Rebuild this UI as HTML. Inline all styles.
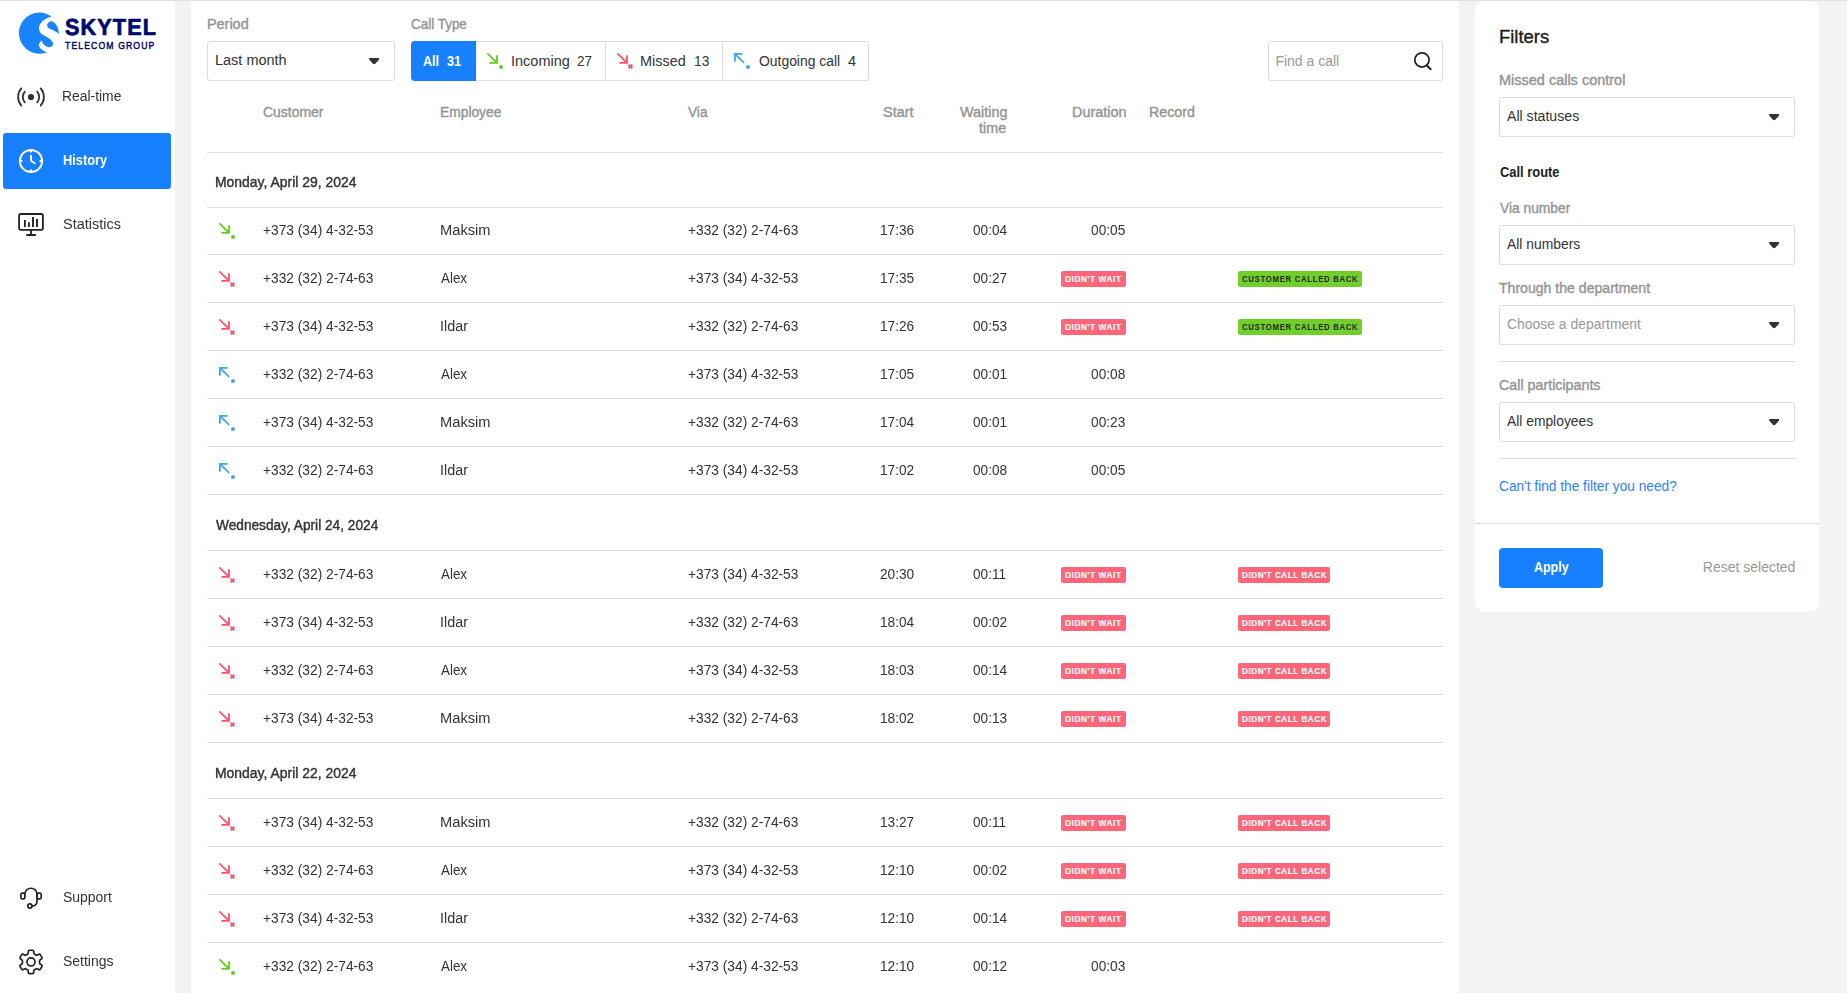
<!DOCTYPE html>
<html lang="en">
<head>
<meta charset="utf-8">
<title>Skytel Telecom Group - Call history</title>
<style>
html,body{margin:0;padding:0}
body{width:1847px;height:993px;overflow:hidden;position:relative;background:#f2f4f3;font-family:"Liberation Sans",sans-serif;font-size:14px;color:#333}
.abs,.t,.ln,.box,.badge,svg.ic{position:absolute}
.t{white-space:nowrap;line-height:1;transform-origin:0 50%;display:block}
.topline{left:0;top:0;width:1847px;height:1px;background:#dfe1df}
.sidebar{left:0;top:1px;width:175px;height:992px;background:#fff}
.main{left:191px;top:1px;width:1268px;height:992px;background:#fff}
.filters{left:1475px;top:1px;width:344px;height:611px;background:#fff;border-radius:10px}
.ln{height:1px;background:#dcdcdc}
.box{box-sizing:border-box;border:1px solid #dbdbdb;border-radius:3px;background:#fff}
.badge{height:16px;border-radius:2px}
.red{background:#ff6679}
.green{background:#72cf2b}
.glayer{left:0;top:0;width:1847px;height:993px;will-change:transform}
.navact{left:3px;top:133px;width:168px;height:56px;background:#1780ff;border-radius:3px}
.btn{background:#1780ff;border-radius:4px}
</style>
</head>
<body>
<div class="abs topline"></div>
<nav class="abs sidebar"></nav>
<main class="abs main"></main>
<aside class="abs filters"></aside>
<div class="abs navact"></div>
<svg class="ic" style="left:10px;top:5px" width="80" height="55" viewBox="0 0 1444 993">
<path fill="#1a83ff" d="M754 209C690 165 610 135 532 135A372 372 0 1 0 672 852C600 832 540 790 520 735C520 700 545 665 572 635C585 690 620 740 690 762C740 765 785 735 778 690C765 640 700 595 640 565C570 530 525 490 522 420C525 330 620 240 754 209Z"/>
<path fill="#1a83ff" d="M670 355C680 315 720 290 760 295C830 320 880 420 885 522C850 490 780 460 730 435C690 415 665 390 670 355Z"/>
</svg>
<svg class="ic" style="left:11px;top:76px" width="40" height="40" viewBox="0 0 40 40" fill="none" stroke="#333" stroke-width="1.8" stroke-linecap="round"><path d="M10.34 29.55A12.9 12.9 0 0 1 10.34 12.45M13.81 26.38A8.2 8.2 0 0 1 13.81 15.62M29.66 29.55A12.9 12.9 0 0 0 29.66 12.45M26.19 26.38A8.2 8.2 0 0 0 26.19 15.62"/><circle cx="20" cy="21" r="3.1" fill="#333" stroke="none"/></svg>
<svg class="ic" style="left:11px;top:141px" width="40" height="40" viewBox="0 0 40 40" fill="none" stroke="#fff" stroke-width="2" stroke-linecap="round" stroke-linejoin="round"><circle cx="20" cy="20" r="11.1"/><path d="M20 9V11.4M20 28.6V31M9 20H11.4M28.6 20H31" stroke-linecap="butt"/><path d="M20 14.7V19.8L23.6 22.3"/></svg>
<svg class="ic" style="left:11px;top:204px" width="40" height="40" viewBox="0 0 40 40" fill="none" stroke="#222" stroke-width="1.8" stroke-linecap="round" stroke-linejoin="round"><rect x="8.1" y="10" width="23.8" height="15.9" rx="1.6"/><path d="M20 26V31M16 31H24.2"/><path d="M13.9 16.1V23M17.9 18.2V23M22 13.1V23M26 15.1V23" stroke-width="1.9" stroke-linecap="butt"/></svg>
<svg class="ic" style="left:11px;top:878px" width="40" height="40" viewBox="0 0 40 40" fill="none" stroke="#222" stroke-width="1.7" stroke-linecap="round" stroke-linejoin="round"><rect x="9.9" y="15.15" width="3.95" height="5.75" rx="1.5"/><rect x="26" y="15.15" width="4.2" height="5.75" rx="1.5"/><path d="M13.85 16.1A6.08 6.08 0 0 1 26 16.1V23.6A4.3 4.3 0 0 1 21 27.9"/><circle cx="18.9" cy="28" r="2.1"/></svg>
<svg class="ic" style="left:11px;top:942px" width="40" height="40" viewBox="0 0 40 40" fill="none" stroke="#222" stroke-width="1.7" stroke-linejoin="round"><path d="M16.46 12.15Q17.24 11.70 17.26 10.80L17.28 9.46Q17.30 8.26 18.50 8.26L21.50 8.26Q22.70 8.26 22.72 9.46L22.74 10.80Q22.76 11.70 23.54 12.15L24.99 12.98Q25.76 13.43 26.55 13.00L27.73 12.35Q28.78 11.77 29.38 12.81L30.88 15.40Q31.48 16.44 30.45 17.06L29.30 17.75Q28.53 18.22 28.53 19.12L28.53 20.78Q28.53 21.68 29.30 22.15L30.45 22.84Q31.48 23.46 30.88 24.50L29.38 27.09Q28.78 28.13 27.73 27.55L26.55 26.90Q25.76 26.47 24.99 26.92L23.54 27.75Q22.76 28.20 22.74 29.10L22.72 30.44Q22.70 31.64 21.50 31.64L18.50 31.64Q17.30 31.64 17.28 30.44L17.26 29.10Q17.24 28.20 16.46 27.75L15.01 26.92Q14.24 26.47 13.45 26.90L12.27 27.55Q11.22 28.13 10.62 27.09L9.12 24.50Q8.52 23.46 9.55 22.84L10.70 22.15Q11.47 21.68 11.47 20.78L11.47 19.12Q11.47 18.22 10.70 17.75L9.55 17.06Q8.52 16.44 9.12 15.40L10.62 12.81Q11.22 11.77 12.27 12.35L13.45 13.00Q14.24 13.43 15.01 12.98Z"/><circle cx="20" cy="19.95" r="4"/></svg>
<div class="box" style="left:207px;top:41px;width:188px;height:40px"></div>
<svg class="ic" style="left:368.9px;top:58.0px;overflow:visible" width="11" height="7" viewBox="0 0 11 7"><path d="M1 0H9.2Q10.3 0 10.2 1Q10.1 1.5 9.7 1.9L6.5 5.4Q5.1 7 3.7 5.4L0.5 1.9Q0.1 1.5 0 1Q-0.1 0 1 0Z" fill="#333"/></svg>
<div class="box" style="left:411px;top:41px;width:458px;height:40px"></div>
<div class="abs btn" style="left:411px;top:41px;width:65px;height:40px;border-radius:4px 0 0 4px"></div>
<div class="ln" style="left:605px;top:42px;width:1px;height:38px;background:#d9d9d9"></div>
<div class="ln" style="left:722px;top:42px;width:1px;height:38px;background:#d9d9d9"></div>
<svg class="ic" style="left:485.6px;top:51.7px" width="20" height="20" viewBox="0 0 20 20" fill="none" stroke="#67cc1e" stroke-width="1.8" stroke-linecap="round" stroke-linejoin="round"><path d="M1.9 1.9 11 10.9M11 3.9V10.9H4.1"/><circle cx="15" cy="15" r="2" fill="#67cc1e" stroke="none"/></svg>
<svg class="ic" style="left:615.6px;top:51.7px" width="20" height="20" viewBox="0 0 20 20" fill="none" stroke="#ff5269" stroke-width="1.8" stroke-linecap="round" stroke-linejoin="round"><path d="M1.9 1.9 11 10.9M11 3.9V10.9H4.1"/><path d="M12.6 12.6 16.4 16.4M16.4 12.6 12.6 16.4" stroke-width="1.9" stroke-linecap="butt"/></svg>
<svg class="ic" style="left:732.6px;top:51.7px" width="20" height="20" viewBox="0 0 20 20" fill="none" stroke="#40a6f4" stroke-width="1.8" stroke-linecap="round" stroke-linejoin="round"><path d="M1.9 1.9 10.6 10.4M8.9 1.9H1.9V8.9"/><circle cx="15" cy="15" r="2" fill="#40a6f4" stroke="none"/></svg>
<div class="box" style="left:1268px;top:41px;width:175px;height:40px"></div>
<svg class="ic" style="left:1411px;top:50px" width="24" height="24" viewBox="0 0 24 24" fill="none" stroke="#222" stroke-width="1.75" stroke-linecap="round"><circle cx="10.97" cy="9.9" r="7.12"/><path d="M15.9 15.5 19.6 19.2" stroke-width="2.1"/></svg>
<div class="ln" style="left:207px;top:152px;width:1236px"></div>
<div class="ln" style="left:207px;top:207px;width:1236px"></div>
<svg class="ic" style="left:218px;top:222px" width="20" height="20" viewBox="0 0 20 20" fill="none" stroke="#67cc1e" stroke-width="1.8" stroke-linecap="round" stroke-linejoin="round"><path d="M1.9 1.9 11 10.9M11 3.9V10.9H4.1"/><circle cx="15" cy="15" r="2" fill="#67cc1e" stroke="none"/></svg>
<div class="ln" style="left:207px;top:254px;width:1236px"></div>
<svg class="ic" style="left:218px;top:270px" width="20" height="20" viewBox="0 0 20 20" fill="none" stroke="#ff5269" stroke-width="1.8" stroke-linecap="round" stroke-linejoin="round"><path d="M1.9 1.9 11 10.9M11 3.9V10.9H4.1"/><path d="M12.6 12.6 16.4 16.4M16.4 12.6 12.6 16.4" stroke-width="1.9" stroke-linecap="butt"/></svg>
<div class="badge red" style="left:1061px;top:271px;width:65px"></div>
<div class="badge green" style="left:1238px;top:271px;width:124px"></div>
<div class="ln" style="left:207px;top:302px;width:1236px"></div>
<svg class="ic" style="left:218px;top:318px" width="20" height="20" viewBox="0 0 20 20" fill="none" stroke="#ff5269" stroke-width="1.8" stroke-linecap="round" stroke-linejoin="round"><path d="M1.9 1.9 11 10.9M11 3.9V10.9H4.1"/><path d="M12.6 12.6 16.4 16.4M16.4 12.6 12.6 16.4" stroke-width="1.9" stroke-linecap="butt"/></svg>
<div class="badge red" style="left:1061px;top:319px;width:65px"></div>
<div class="badge green" style="left:1238px;top:319px;width:124px"></div>
<div class="ln" style="left:207px;top:350px;width:1236px"></div>
<svg class="ic" style="left:218px;top:366px" width="20" height="20" viewBox="0 0 20 20" fill="none" stroke="#40a6f4" stroke-width="1.8" stroke-linecap="round" stroke-linejoin="round"><path d="M1.9 1.9 10.6 10.4M8.9 1.9H1.9V8.9"/><circle cx="15" cy="15" r="2" fill="#40a6f4" stroke="none"/></svg>
<div class="ln" style="left:207px;top:398px;width:1236px"></div>
<svg class="ic" style="left:218px;top:414px" width="20" height="20" viewBox="0 0 20 20" fill="none" stroke="#40a6f4" stroke-width="1.8" stroke-linecap="round" stroke-linejoin="round"><path d="M1.9 1.9 10.6 10.4M8.9 1.9H1.9V8.9"/><circle cx="15" cy="15" r="2" fill="#40a6f4" stroke="none"/></svg>
<div class="ln" style="left:207px;top:446px;width:1236px"></div>
<svg class="ic" style="left:218px;top:462px" width="20" height="20" viewBox="0 0 20 20" fill="none" stroke="#40a6f4" stroke-width="1.8" stroke-linecap="round" stroke-linejoin="round"><path d="M1.9 1.9 10.6 10.4M8.9 1.9H1.9V8.9"/><circle cx="15" cy="15" r="2" fill="#40a6f4" stroke="none"/></svg>
<div class="ln" style="left:207px;top:494px;width:1236px"></div>
<div class="ln" style="left:207px;top:550px;width:1236px"></div>
<svg class="ic" style="left:218px;top:566px" width="20" height="20" viewBox="0 0 20 20" fill="none" stroke="#ff5269" stroke-width="1.8" stroke-linecap="round" stroke-linejoin="round"><path d="M1.9 1.9 11 10.9M11 3.9V10.9H4.1"/><path d="M12.6 12.6 16.4 16.4M16.4 12.6 12.6 16.4" stroke-width="1.9" stroke-linecap="butt"/></svg>
<div class="badge red" style="left:1061px;top:567px;width:65px"></div>
<div class="badge red" style="left:1238px;top:567px;width:92px"></div>
<div class="ln" style="left:207px;top:598px;width:1236px"></div>
<svg class="ic" style="left:218px;top:614px" width="20" height="20" viewBox="0 0 20 20" fill="none" stroke="#ff5269" stroke-width="1.8" stroke-linecap="round" stroke-linejoin="round"><path d="M1.9 1.9 11 10.9M11 3.9V10.9H4.1"/><path d="M12.6 12.6 16.4 16.4M16.4 12.6 12.6 16.4" stroke-width="1.9" stroke-linecap="butt"/></svg>
<div class="badge red" style="left:1061px;top:615px;width:65px"></div>
<div class="badge red" style="left:1238px;top:615px;width:92px"></div>
<div class="ln" style="left:207px;top:646px;width:1236px"></div>
<svg class="ic" style="left:218px;top:662px" width="20" height="20" viewBox="0 0 20 20" fill="none" stroke="#ff5269" stroke-width="1.8" stroke-linecap="round" stroke-linejoin="round"><path d="M1.9 1.9 11 10.9M11 3.9V10.9H4.1"/><path d="M12.6 12.6 16.4 16.4M16.4 12.6 12.6 16.4" stroke-width="1.9" stroke-linecap="butt"/></svg>
<div class="badge red" style="left:1061px;top:663px;width:65px"></div>
<div class="badge red" style="left:1238px;top:663px;width:92px"></div>
<div class="ln" style="left:207px;top:694px;width:1236px"></div>
<svg class="ic" style="left:218px;top:710px" width="20" height="20" viewBox="0 0 20 20" fill="none" stroke="#ff5269" stroke-width="1.8" stroke-linecap="round" stroke-linejoin="round"><path d="M1.9 1.9 11 10.9M11 3.9V10.9H4.1"/><path d="M12.6 12.6 16.4 16.4M16.4 12.6 12.6 16.4" stroke-width="1.9" stroke-linecap="butt"/></svg>
<div class="badge red" style="left:1061px;top:711px;width:65px"></div>
<div class="badge red" style="left:1238px;top:711px;width:92px"></div>
<div class="ln" style="left:207px;top:742px;width:1236px"></div>
<div class="ln" style="left:207px;top:798px;width:1236px"></div>
<svg class="ic" style="left:218px;top:814px" width="20" height="20" viewBox="0 0 20 20" fill="none" stroke="#ff5269" stroke-width="1.8" stroke-linecap="round" stroke-linejoin="round"><path d="M1.9 1.9 11 10.9M11 3.9V10.9H4.1"/><path d="M12.6 12.6 16.4 16.4M16.4 12.6 12.6 16.4" stroke-width="1.9" stroke-linecap="butt"/></svg>
<div class="badge red" style="left:1061px;top:815px;width:65px"></div>
<div class="badge red" style="left:1238px;top:815px;width:92px"></div>
<div class="ln" style="left:207px;top:846px;width:1236px"></div>
<svg class="ic" style="left:218px;top:862px" width="20" height="20" viewBox="0 0 20 20" fill="none" stroke="#ff5269" stroke-width="1.8" stroke-linecap="round" stroke-linejoin="round"><path d="M1.9 1.9 11 10.9M11 3.9V10.9H4.1"/><path d="M12.6 12.6 16.4 16.4M16.4 12.6 12.6 16.4" stroke-width="1.9" stroke-linecap="butt"/></svg>
<div class="badge red" style="left:1061px;top:863px;width:65px"></div>
<div class="badge red" style="left:1238px;top:863px;width:92px"></div>
<div class="ln" style="left:207px;top:894px;width:1236px"></div>
<svg class="ic" style="left:218px;top:910px" width="20" height="20" viewBox="0 0 20 20" fill="none" stroke="#ff5269" stroke-width="1.8" stroke-linecap="round" stroke-linejoin="round"><path d="M1.9 1.9 11 10.9M11 3.9V10.9H4.1"/><path d="M12.6 12.6 16.4 16.4M16.4 12.6 12.6 16.4" stroke-width="1.9" stroke-linecap="butt"/></svg>
<div class="badge red" style="left:1061px;top:911px;width:65px"></div>
<div class="badge red" style="left:1238px;top:911px;width:92px"></div>
<div class="ln" style="left:207px;top:942px;width:1236px"></div>
<svg class="ic" style="left:218px;top:958px" width="20" height="20" viewBox="0 0 20 20" fill="none" stroke="#67cc1e" stroke-width="1.8" stroke-linecap="round" stroke-linejoin="round"><path d="M1.9 1.9 11 10.9M11 3.9V10.9H4.1"/><circle cx="15" cy="15" r="2" fill="#67cc1e" stroke="none"/></svg>
<div class="box" style="left:1499px;top:97px;width:296px;height:40px"></div>
<svg class="ic" style="left:1768.85px;top:113.9px;overflow:visible" width="11" height="7" viewBox="0 0 11 7"><path d="M1 0H9.2Q10.3 0 10.2 1Q10.1 1.5 9.7 1.9L6.5 5.4Q5.1 7 3.7 5.4L0.5 1.9Q0.1 1.5 0 1Q-0.1 0 1 0Z" fill="#333"/></svg>
<div class="box" style="left:1499px;top:225px;width:296px;height:40px"></div>
<svg class="ic" style="left:1768.85px;top:241.9px;overflow:visible" width="11" height="7" viewBox="0 0 11 7"><path d="M1 0H9.2Q10.3 0 10.2 1Q10.1 1.5 9.7 1.9L6.5 5.4Q5.1 7 3.7 5.4L0.5 1.9Q0.1 1.5 0 1Q-0.1 0 1 0Z" fill="#333"/></svg>
<div class="box" style="left:1499px;top:305px;width:296px;height:40px"></div>
<svg class="ic" style="left:1768.85px;top:321.9px;overflow:visible" width="11" height="7" viewBox="0 0 11 7"><path d="M1 0H9.2Q10.3 0 10.2 1Q10.1 1.5 9.7 1.9L6.5 5.4Q5.1 7 3.7 5.4L0.5 1.9Q0.1 1.5 0 1Q-0.1 0 1 0Z" fill="#333"/></svg>
<div class="ln" style="left:1499px;top:361px;width:296px"></div>
<div class="box" style="left:1499px;top:402px;width:296px;height:40px"></div>
<svg class="ic" style="left:1768.85px;top:418.9px;overflow:visible" width="11" height="7" viewBox="0 0 11 7"><path d="M1 0H9.2Q10.3 0 10.2 1Q10.1 1.5 9.7 1.9L6.5 5.4Q5.1 7 3.7 5.4L0.5 1.9Q0.1 1.5 0 1Q-0.1 0 1 0Z" fill="#333"/></svg>
<div class="ln" style="left:1499px;top:458px;width:296px"></div>
<div class="ln" style="left:1475px;top:523px;width:344px"></div>
<div class="abs btn" style="left:1499px;top:548px;width:104px;height:40px"></div>
<span class="t" style="left:64.60px;top:15.70px;font-size:23.2px;color:#00086e;font-weight:700;transform:matrix(0.9331,0.0005,0,1,0,0);letter-spacing:1.2px;-webkit-text-stroke:0.7px #00086e;">SKYTEL</span>
<span class="t" style="left:65.10px;top:40.80px;font-size:10.2px;color:#00086e;transform:matrix(0.8504,0.0005,0,1,0,0);letter-spacing:1.3px;-webkit-text-stroke:0.45px #00086e;">TELECOM GROUP</span>
<span class="t" style="left:206.77px;top:16.70px;font-size:14px;color:#959595;transform:scaleX(1.0289);-webkit-text-stroke:0.4px #959595;">Period</span>
<span class="t" style="left:411.40px;top:16.70px;font-size:14px;color:#959595;transform:scaleX(0.9612);-webkit-text-stroke:0.4px #959595;">Call Type</span>
<span class="t" style="left:214.57px;top:52.90px;font-size:14px;color:#333;transform:scaleX(1.0344);">Last month</span>
<span class="t" style="left:423.00px;top:54.00px;font-size:14px;color:#fff;font-weight:700;transform:scaleX(0.9000);">All</span>
<span class="t" style="left:447.10px;top:54.00px;font-size:14px;color:#fff;font-weight:700;transform:scaleX(0.9059);">31</span>
<span class="t" style="left:510.56px;top:54.00px;font-size:14px;color:#333;transform:scaleX(1.0360);">Incoming</span>
<span class="t" style="left:577.20px;top:54.00px;font-size:14px;color:#333;transform:scaleX(0.9629);">27</span>
<span class="t" style="left:640.47px;top:54.00px;font-size:14px;color:#333;transform:scaleX(1.0315);">Missed</span>
<span class="t" style="left:694.01px;top:54.00px;font-size:14px;color:#333;transform:scaleX(0.9874);">13</span>
<span class="t" style="left:758.80px;top:54.00px;font-size:14px;color:#333;transform:scaleX(0.9926);">Outgoing call</span>
<span class="t" style="left:848.00px;top:54.00px;font-size:14px;color:#333;transform:scaleX(1.0375);">4</span>
<span class="t" style="left:1275.40px;top:54.00px;font-size:14px;color:#999;">Find a call</span>
<span class="t" style="left:263.20px;top:104.70px;font-size:14px;color:#959595;transform:scaleX(0.9947);-webkit-text-stroke:0.4px #959595;">Customer</span>
<span class="t" style="left:439.51px;top:104.70px;font-size:14px;color:#959595;transform:scaleX(0.9859);-webkit-text-stroke:0.4px #959595;">Employee</span>
<span class="t" style="left:688.30px;top:104.70px;font-size:14px;color:#959595;transform:scaleX(0.9755);-webkit-text-stroke:0.4px #959595;">Via</span>
<span class="t" style="left:883.40px;top:104.70px;font-size:14px;color:#959595;transform:scaleX(1.0311);-webkit-text-stroke:0.4px #959595;">Start</span>
<span class="t" style="left:960.10px;top:104.70px;font-size:14px;color:#959595;transform:scaleX(1.0292);-webkit-text-stroke:0.4px #959595;">Waiting</span>
<span class="t" style="left:979.40px;top:120.80px;font-size:14px;color:#959595;transform:scaleX(1.0277);-webkit-text-stroke:0.4px #959595;">time</span>
<span class="t" style="left:1072.07px;top:104.70px;font-size:14px;color:#959595;transform:scaleX(1.0326);-webkit-text-stroke:0.4px #959595;">Duration</span>
<span class="t" style="left:1148.98px;top:104.70px;font-size:14px;color:#959595;transform:scaleX(1.0151);-webkit-text-stroke:0.4px #959595;">Record</span>
<span class="t" style="left:1065.20px;top:274.70px;font-size:8.4px;color:#fff;font-weight:700;transform:scaleX(0.9840);letter-spacing:0.6px;-webkit-text-stroke:0.15px #fff;">DIDN'T WAIT</span>
<span class="t" style="left:1242.10px;top:274.70px;font-size:8.4px;color:#1e2a14;font-weight:700;transform:scaleX(0.9194);letter-spacing:0.8px;">CUSTOMER CALLED BACK</span>
<span class="t" style="left:1065.20px;top:322.70px;font-size:8.4px;color:#fff;font-weight:700;transform:scaleX(0.9840);letter-spacing:0.6px;-webkit-text-stroke:0.15px #fff;">DIDN'T WAIT</span>
<span class="t" style="left:1242.10px;top:322.70px;font-size:8.4px;color:#1e2a14;font-weight:700;transform:scaleX(0.9194);letter-spacing:0.8px;">CUSTOMER CALLED BACK</span>
<span class="t" style="left:1065.20px;top:570.70px;font-size:8.4px;color:#fff;font-weight:700;transform:scaleX(0.9840);letter-spacing:0.6px;-webkit-text-stroke:0.15px #fff;">DIDN'T WAIT</span>
<span class="t" style="left:1242.10px;top:570.70px;font-size:8.4px;color:#fff;font-weight:700;transform:scaleX(0.9646);letter-spacing:0.6px;-webkit-text-stroke:0.15px #fff;">DIDN'T CALL BACK</span>
<span class="t" style="left:1065.20px;top:618.70px;font-size:8.4px;color:#fff;font-weight:700;transform:scaleX(0.9840);letter-spacing:0.6px;-webkit-text-stroke:0.15px #fff;">DIDN'T WAIT</span>
<span class="t" style="left:1242.10px;top:618.70px;font-size:8.4px;color:#fff;font-weight:700;transform:scaleX(0.9646);letter-spacing:0.6px;-webkit-text-stroke:0.15px #fff;">DIDN'T CALL BACK</span>
<span class="t" style="left:1065.20px;top:666.70px;font-size:8.4px;color:#fff;font-weight:700;transform:scaleX(0.9840);letter-spacing:0.6px;-webkit-text-stroke:0.15px #fff;">DIDN'T WAIT</span>
<span class="t" style="left:1242.10px;top:666.70px;font-size:8.4px;color:#fff;font-weight:700;transform:scaleX(0.9646);letter-spacing:0.6px;-webkit-text-stroke:0.15px #fff;">DIDN'T CALL BACK</span>
<span class="t" style="left:1065.20px;top:714.70px;font-size:8.4px;color:#fff;font-weight:700;transform:scaleX(0.9840);letter-spacing:0.6px;-webkit-text-stroke:0.15px #fff;">DIDN'T WAIT</span>
<span class="t" style="left:1242.10px;top:714.70px;font-size:8.4px;color:#fff;font-weight:700;transform:scaleX(0.9646);letter-spacing:0.6px;-webkit-text-stroke:0.15px #fff;">DIDN'T CALL BACK</span>
<span class="t" style="left:1065.20px;top:818.70px;font-size:8.4px;color:#fff;font-weight:700;transform:scaleX(0.9840);letter-spacing:0.6px;-webkit-text-stroke:0.15px #fff;">DIDN'T WAIT</span>
<span class="t" style="left:1242.10px;top:818.70px;font-size:8.4px;color:#fff;font-weight:700;transform:scaleX(0.9646);letter-spacing:0.6px;-webkit-text-stroke:0.15px #fff;">DIDN'T CALL BACK</span>
<span class="t" style="left:1065.20px;top:866.70px;font-size:8.4px;color:#fff;font-weight:700;transform:scaleX(0.9840);letter-spacing:0.6px;-webkit-text-stroke:0.15px #fff;">DIDN'T WAIT</span>
<span class="t" style="left:1242.10px;top:866.70px;font-size:8.4px;color:#fff;font-weight:700;transform:scaleX(0.9646);letter-spacing:0.6px;-webkit-text-stroke:0.15px #fff;">DIDN'T CALL BACK</span>
<span class="t" style="left:1065.20px;top:914.70px;font-size:8.4px;color:#fff;font-weight:700;transform:scaleX(0.9840);letter-spacing:0.6px;-webkit-text-stroke:0.15px #fff;">DIDN'T WAIT</span>
<span class="t" style="left:1242.10px;top:914.70px;font-size:8.4px;color:#fff;font-weight:700;transform:scaleX(0.9646);letter-spacing:0.6px;-webkit-text-stroke:0.15px #fff;">DIDN'T CALL BACK</span>
<span class="t" style="left:1498.67px;top:27.80px;font-size:18px;color:#1f1f1f;transform:scaleX(1.0250);-webkit-text-stroke:0.4px #1f1f1f;">Filters</span>
<span class="t" style="left:1498.57px;top:73.00px;font-size:14px;color:#959595;transform:scaleX(1.0344);-webkit-text-stroke:0.4px #959595;">Missed calls control</span>
<span class="t" style="left:1507.40px;top:108.90px;font-size:14px;color:#333;transform:scaleX(1.0086);">All statuses</span>
<span class="t" style="left:1499.50px;top:164.70px;font-size:14px;color:#222;font-weight:700;transform:scaleX(0.9216);">Call route</span>
<span class="t" style="left:1499.50px;top:200.80px;font-size:14px;color:#959595;transform:scaleX(0.9850);-webkit-text-stroke:0.4px #959595;">Via number</span>
<span class="t" style="left:1507.40px;top:236.90px;font-size:14px;color:#333;transform:scaleX(0.9917);">All numbers</span>
<span class="t" style="left:1499.40px;top:280.60px;font-size:14px;color:#959595;transform:scaleX(1.0059);-webkit-text-stroke:0.4px #959595;">Through the department</span>
<span class="t" style="left:1507.10px;top:316.90px;font-size:14px;color:#999;transform:scaleX(0.9944);">Choose a department</span>
<span class="t" style="left:1499.40px;top:378.10px;font-size:14px;color:#959595;transform:scaleX(1.0191);-webkit-text-stroke:0.4px #959595;">Call participants</span>
<span class="t" style="left:1507.20px;top:413.90px;font-size:14px;color:#333;transform:scaleX(0.9879);">All employees</span>
<span class="t" style="left:1499.40px;top:478.80px;font-size:14px;color:#2b80ff;transform:scaleX(0.9786);">Can't find the filter you need?</span>
<span class="t" style="left:1533.90px;top:560.00px;font-size:14px;color:#fff;font-weight:700;transform:scaleX(0.8899);">Apply</span>
<span class="t" style="left:1702.80px;top:560.00px;font-size:14px;color:#999;">Reset selected</span>
<div class="abs glayer">
<span class="t" style="left:61.91px;top:89.00px;font-size:14px;color:#333;transform:scaleX(0.9913);">Real-time</span>
<span class="t" style="left:62.90px;top:153.00px;font-size:14px;color:#fff;font-weight:700;transform:scaleX(0.9164);">History</span>
<span class="t" style="left:62.90px;top:217.00px;font-size:14px;color:#333;transform:scaleX(1.0337);">Statistics</span>
<span class="t" style="left:62.90px;top:890.00px;font-size:14px;color:#333;">Support</span>
<span class="t" style="left:62.90px;top:954.00px;font-size:14px;color:#333;">Settings</span>
<span class="t" style="left:214.61px;top:175.00px;font-size:14px;color:#333;transform:scaleX(0.9947);-webkit-text-stroke:0.4px #333;">Monday, April 29, 2024</span>
<span class="t" style="left:263.30px;top:223.00px;font-size:14px;color:#333;transform:scaleX(0.9816);">+373 (34) 4-32-53</span>
<span class="t" style="left:439.55px;top:223.00px;font-size:14px;color:#333;transform:scaleX(1.0481);">Maksim</span>
<span class="t" style="left:688.40px;top:223.00px;font-size:14px;color:#333;transform:scaleX(0.9816);">+332 (32) 2-74-63</span>
<span class="t" style="left:879.60px;top:223.00px;font-size:14px;color:#333;transform:scaleX(0.9759);">17:36</span>
<span class="t" style="left:972.50px;top:223.00px;font-size:14px;color:#333;transform:scaleX(0.9731);">00:04</span>
<span class="t" style="left:1091.30px;top:223.00px;font-size:14px;color:#333;transform:scaleX(0.9816);">00:05</span>
<span class="t" style="left:263.30px;top:271.00px;font-size:14px;color:#333;transform:scaleX(0.9816);">+332 (32) 2-74-63</span>
<span class="t" style="left:440.60px;top:271.00px;font-size:14px;color:#333;transform:scaleX(0.9547);">Alex</span>
<span class="t" style="left:688.40px;top:271.00px;font-size:14px;color:#333;transform:scaleX(0.9816);">+373 (34) 4-32-53</span>
<span class="t" style="left:879.60px;top:271.00px;font-size:14px;color:#333;transform:scaleX(0.9759);">17:35</span>
<span class="t" style="left:972.50px;top:271.00px;font-size:14px;color:#333;transform:scaleX(0.9731);">00:27</span>
<span class="t" style="left:263.30px;top:319.00px;font-size:14px;color:#333;transform:scaleX(0.9816);">+373 (34) 4-32-53</span>
<span class="t" style="left:439.57px;top:319.00px;font-size:14px;color:#333;transform:scaleX(1.0274);">Ildar</span>
<span class="t" style="left:688.40px;top:319.00px;font-size:14px;color:#333;transform:scaleX(0.9816);">+332 (32) 2-74-63</span>
<span class="t" style="left:879.60px;top:319.00px;font-size:14px;color:#333;transform:scaleX(0.9759);">17:26</span>
<span class="t" style="left:972.50px;top:319.00px;font-size:14px;color:#333;transform:scaleX(0.9731);">00:53</span>
<span class="t" style="left:263.30px;top:367.00px;font-size:14px;color:#333;transform:scaleX(0.9816);">+332 (32) 2-74-63</span>
<span class="t" style="left:440.60px;top:367.00px;font-size:14px;color:#333;transform:scaleX(0.9547);">Alex</span>
<span class="t" style="left:688.40px;top:367.00px;font-size:14px;color:#333;transform:scaleX(0.9816);">+373 (34) 4-32-53</span>
<span class="t" style="left:879.60px;top:367.00px;font-size:14px;color:#333;transform:scaleX(0.9759);">17:05</span>
<span class="t" style="left:972.50px;top:367.00px;font-size:14px;color:#333;transform:scaleX(0.9731);">00:01</span>
<span class="t" style="left:1091.30px;top:367.00px;font-size:14px;color:#333;transform:scaleX(0.9816);">00:08</span>
<span class="t" style="left:263.30px;top:415.00px;font-size:14px;color:#333;transform:scaleX(0.9816);">+373 (34) 4-32-53</span>
<span class="t" style="left:439.55px;top:415.00px;font-size:14px;color:#333;transform:scaleX(1.0481);">Maksim</span>
<span class="t" style="left:688.40px;top:415.00px;font-size:14px;color:#333;transform:scaleX(0.9816);">+332 (32) 2-74-63</span>
<span class="t" style="left:879.60px;top:415.00px;font-size:14px;color:#333;transform:scaleX(0.9759);">17:04</span>
<span class="t" style="left:972.50px;top:415.00px;font-size:14px;color:#333;transform:scaleX(0.9731);">00:01</span>
<span class="t" style="left:1091.30px;top:415.00px;font-size:14px;color:#333;transform:scaleX(0.9816);">00:23</span>
<span class="t" style="left:263.30px;top:463.00px;font-size:14px;color:#333;transform:scaleX(0.9816);">+332 (32) 2-74-63</span>
<span class="t" style="left:439.57px;top:463.00px;font-size:14px;color:#333;transform:scaleX(1.0274);">Ildar</span>
<span class="t" style="left:688.40px;top:463.00px;font-size:14px;color:#333;transform:scaleX(0.9816);">+373 (34) 4-32-53</span>
<span class="t" style="left:879.60px;top:463.00px;font-size:14px;color:#333;transform:scaleX(0.9759);">17:02</span>
<span class="t" style="left:972.50px;top:463.00px;font-size:14px;color:#333;transform:scaleX(0.9731);">00:08</span>
<span class="t" style="left:1091.30px;top:463.00px;font-size:14px;color:#333;transform:scaleX(0.9816);">00:05</span>
<span class="t" style="left:215.60px;top:518.00px;font-size:14px;color:#333;transform:scaleX(0.9771);-webkit-text-stroke:0.4px #333;">Wednesday, April 24, 2024</span>
<span class="t" style="left:263.30px;top:567.00px;font-size:14px;color:#333;transform:scaleX(0.9816);">+332 (32) 2-74-63</span>
<span class="t" style="left:440.60px;top:567.00px;font-size:14px;color:#333;transform:scaleX(0.9547);">Alex</span>
<span class="t" style="left:688.40px;top:567.00px;font-size:14px;color:#333;transform:scaleX(0.9816);">+373 (34) 4-32-53</span>
<span class="t" style="left:879.60px;top:567.00px;font-size:14px;color:#333;transform:scaleX(0.9759);">20:30</span>
<span class="t" style="left:972.50px;top:567.00px;font-size:14px;color:#333;transform:scaleX(0.9731);">00:11</span>
<span class="t" style="left:263.30px;top:615.00px;font-size:14px;color:#333;transform:scaleX(0.9816);">+373 (34) 4-32-53</span>
<span class="t" style="left:439.57px;top:615.00px;font-size:14px;color:#333;transform:scaleX(1.0274);">Ildar</span>
<span class="t" style="left:688.40px;top:615.00px;font-size:14px;color:#333;transform:scaleX(0.9816);">+332 (32) 2-74-63</span>
<span class="t" style="left:879.60px;top:615.00px;font-size:14px;color:#333;transform:scaleX(0.9759);">18:04</span>
<span class="t" style="left:972.50px;top:615.00px;font-size:14px;color:#333;transform:scaleX(0.9731);">00:02</span>
<span class="t" style="left:263.30px;top:663.00px;font-size:14px;color:#333;transform:scaleX(0.9816);">+332 (32) 2-74-63</span>
<span class="t" style="left:440.60px;top:663.00px;font-size:14px;color:#333;transform:scaleX(0.9547);">Alex</span>
<span class="t" style="left:688.40px;top:663.00px;font-size:14px;color:#333;transform:scaleX(0.9816);">+373 (34) 4-32-53</span>
<span class="t" style="left:879.60px;top:663.00px;font-size:14px;color:#333;transform:scaleX(0.9759);">18:03</span>
<span class="t" style="left:972.50px;top:663.00px;font-size:14px;color:#333;transform:scaleX(0.9731);">00:14</span>
<span class="t" style="left:263.30px;top:711.00px;font-size:14px;color:#333;transform:scaleX(0.9816);">+373 (34) 4-32-53</span>
<span class="t" style="left:439.55px;top:711.00px;font-size:14px;color:#333;transform:scaleX(1.0481);">Maksim</span>
<span class="t" style="left:688.40px;top:711.00px;font-size:14px;color:#333;transform:scaleX(0.9816);">+332 (32) 2-74-63</span>
<span class="t" style="left:879.60px;top:711.00px;font-size:14px;color:#333;transform:scaleX(0.9759);">18:02</span>
<span class="t" style="left:972.50px;top:711.00px;font-size:14px;color:#333;transform:scaleX(0.9731);">00:13</span>
<span class="t" style="left:214.61px;top:766.00px;font-size:14px;color:#333;transform:scaleX(0.9947);-webkit-text-stroke:0.4px #333;">Monday, April 22, 2024</span>
<span class="t" style="left:263.30px;top:815.00px;font-size:14px;color:#333;transform:scaleX(0.9816);">+373 (34) 4-32-53</span>
<span class="t" style="left:439.55px;top:815.00px;font-size:14px;color:#333;transform:scaleX(1.0481);">Maksim</span>
<span class="t" style="left:688.40px;top:815.00px;font-size:14px;color:#333;transform:scaleX(0.9816);">+332 (32) 2-74-63</span>
<span class="t" style="left:879.60px;top:815.00px;font-size:14px;color:#333;transform:scaleX(0.9759);">13:27</span>
<span class="t" style="left:972.50px;top:815.00px;font-size:14px;color:#333;transform:scaleX(0.9731);">00:11</span>
<span class="t" style="left:263.30px;top:863.00px;font-size:14px;color:#333;transform:scaleX(0.9816);">+332 (32) 2-74-63</span>
<span class="t" style="left:440.60px;top:863.00px;font-size:14px;color:#333;transform:scaleX(0.9547);">Alex</span>
<span class="t" style="left:688.40px;top:863.00px;font-size:14px;color:#333;transform:scaleX(0.9816);">+373 (34) 4-32-53</span>
<span class="t" style="left:879.60px;top:863.00px;font-size:14px;color:#333;transform:scaleX(0.9759);">12:10</span>
<span class="t" style="left:972.50px;top:863.00px;font-size:14px;color:#333;transform:scaleX(0.9731);">00:02</span>
<span class="t" style="left:263.30px;top:911.00px;font-size:14px;color:#333;transform:scaleX(0.9816);">+373 (34) 4-32-53</span>
<span class="t" style="left:439.57px;top:911.00px;font-size:14px;color:#333;transform:scaleX(1.0274);">Ildar</span>
<span class="t" style="left:688.40px;top:911.00px;font-size:14px;color:#333;transform:scaleX(0.9816);">+332 (32) 2-74-63</span>
<span class="t" style="left:879.60px;top:911.00px;font-size:14px;color:#333;transform:scaleX(0.9759);">12:10</span>
<span class="t" style="left:972.50px;top:911.00px;font-size:14px;color:#333;transform:scaleX(0.9731);">00:14</span>
<span class="t" style="left:263.30px;top:959.00px;font-size:14px;color:#333;transform:scaleX(0.9816);">+332 (32) 2-74-63</span>
<span class="t" style="left:440.60px;top:959.00px;font-size:14px;color:#333;transform:scaleX(0.9547);">Alex</span>
<span class="t" style="left:688.40px;top:959.00px;font-size:14px;color:#333;transform:scaleX(0.9816);">+373 (34) 4-32-53</span>
<span class="t" style="left:879.60px;top:959.00px;font-size:14px;color:#333;transform:scaleX(0.9759);">12:10</span>
<span class="t" style="left:972.50px;top:959.00px;font-size:14px;color:#333;transform:scaleX(0.9731);">00:12</span>
<span class="t" style="left:1091.30px;top:959.00px;font-size:14px;color:#333;transform:scaleX(0.9816);">00:03</span>
</div>
</body>
</html>
